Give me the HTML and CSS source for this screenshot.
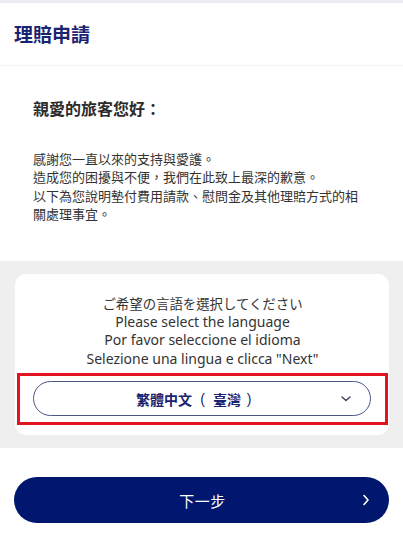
FILE: index.html
```html
<!DOCTYPE html>
<html lang="zh-Hant">
<head>
<meta charset="utf-8">
<title>理賠申請</title>
<link rel="stylesheet" href="styles.css">
</head>
<body>
<div class="topstrip"></div>
<header class="header">
  <h1 class="title">理賠申請</h1>
</header>
<section class="intro">
  <h2 class="greeting">親愛的旅客您好：</h2>
  <p class="message">感謝您一直以來的支持與愛護。<br>造成您的困擾與不便，我們在此致上最深的歉意。<br>以下為您說明墊付費用請款、慰問金及其他理賠方式的相關處理事宜。</p>
</section>
<section class="lang-area">
  <div class="card">
    <div class="prompts">
      <p class="prompt prompt-jp">ご希望の言語を選択してください</p>
      <p class="prompt">Please select the language</p>
      <p class="prompt">Por favor seleccione el idioma</p>
      <p class="prompt">Selezione una lingua e clicca "Next"</p>
    </div>
    <div class="highlight">
      <div class="select">
        <span class="select-label"><span class="word">繁體中文</span><span class="paren paren-open">(</span><span class="word">臺灣</span><span class="paren paren-close">)</span></span>
        <svg class="chev-down" width="12" height="8" viewBox="0 0 12 8"><path d="M2 2 L6 5.5 L10 2" fill="none" stroke="#3a3f5c" stroke-width="1.4" stroke-linecap="round" stroke-linejoin="round"/></svg>
      </div>
    </div>
  </div>
</section>
<section class="actions">
  <button class="next-btn">
    <span class="next-label">下一步</span>
    <svg class="chev-right" width="10" height="14" viewBox="0 0 10 14"><path d="M3 2.5 L7 7 L3 11.5" fill="none" stroke="#ffffff" stroke-width="1.6" stroke-linecap="round" stroke-linejoin="round"/></svg>
  </button>
</section>
</body>
</html>
```
FILE: styles.css
```css
* { box-sizing: border-box; }
html, body { margin: 0; padding: 0; }
body {
  background: #ffffff;
  font-family: "Noto Sans CJK TC", "Noto Sans", sans-serif;
  color: #333333;
  width: 403px;
}
.topstrip {
  height: 3px;
  background: #ebebf1;
}
.header {
  height: 63px;
  display: flex;
  align-items: center;
  padding-left: 14px;
  border-bottom: 1px solid #f4f4f6;
}
.title {
  margin: 0;
  font-size: 19px;
  font-weight: 700;
  color: #1a2370;
  line-height: 24px;
}
.intro {
  padding: 31px 36px 31px 33px;
  height: 195px;
}
.greeting {
  margin: 0;
  font-size: 16px;
  font-weight: 700;
  line-height: 22px;
  color: #2b2b2b;
}
.message {
  margin: 31px 0 0 0;
  font-size: 13px;
  line-height: 18.4px;
  color: #333333;
}
.lang-area {
  background: #efefef;
  padding: 13px 14px 13px 15px;
}
.card {
  background: #ffffff;
  border-radius: 11px;
  padding: 20px 1px 10px 2px;
}
.prompts {
  text-align: center;
  margin-bottom: 5px;
}
.prompt {
  margin: 0;
  font-family: "Noto Sans", "Noto Sans CJK JP", sans-serif;
  font-size: 14px;
  line-height: 18.6px;
  color: #333333;
}
.prompt-jp {
  font-family: "Noto Sans CJK JP", sans-serif;
  font-size: 13.4px;
}
.highlight {
  border: 3px solid #e3141f;
  padding: 5px 14px 6px 13px;
}
.select {
  height: 35px;
  border: 1px solid #4a5588;
  border-radius: 18px;
  display: flex;
  align-items: center;
  justify-content: center;
  position: relative;
}
.select-label {
  display: flex;
  align-items: center;
  font-size: 14px;
  font-weight: 700;
  color: #1a2370;
  margin-left: -11px;
  white-space: nowrap;
  line-height: 20px;
}
.word {
  display: block;
}
.paren {
  display: block;
  text-align: center;
  font-family: "Liberation Sans", sans-serif;
  font-weight: 400;
}
.paren-open {
  width: 21px;
}
.paren-close {
  width: 16px;
}
.chev-down {
  position: absolute;
  right: 18px;
  top: 13px;
}
.actions {
  padding: 29px 14px 28px 14px;
}
.next-btn {
  width: 375px;
  height: 46px;
  border: none;
  border-radius: 23px;
  background: #00166f;
  color: #ffffff;
  font-family: "Noto Sans CJK TC", sans-serif;
  display: flex;
  align-items: center;
  justify-content: center;
  position: relative;
  padding: 0;
}
.next-label {
  font-size: 15px;
  letter-spacing: 0.5px;
  margin-left: 2px;
}
.chev-right {
  position: absolute;
  right: 18px;
  top: 16px;
}
```
